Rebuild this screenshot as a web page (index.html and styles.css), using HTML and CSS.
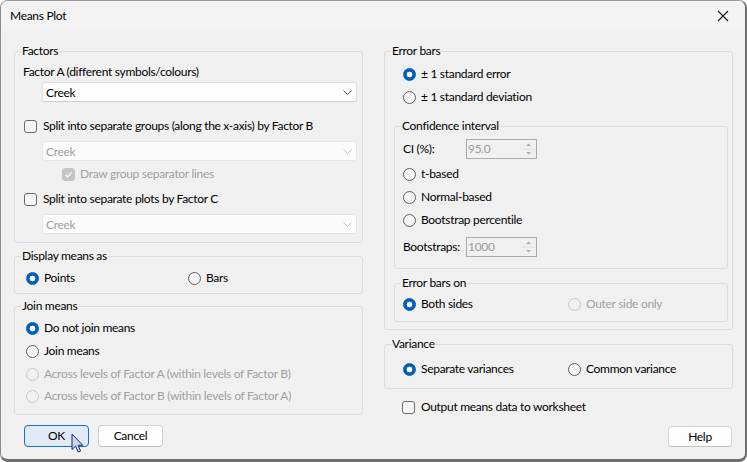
FILE: index.html
```html
<!DOCTYPE html>
<html>
<head>
<meta charset="utf-8">
<title>Means Plot</title>
<link rel="stylesheet" href="styles.css">
</head>
<body>
<div class="window">
  <div class="titlebar">
    <span class="title">Means Plot</span>
    <svg class="close" width="12" height="12" viewBox="0 0 12 12"><path d="M1 1 L11 11 M11 1 L1 11" stroke="#1b1b1b" stroke-width="1.1" fill="none"/></svg>
  </div>
  <div class="content">
    <div class="col">
      <fieldset class="grp factors">
        <legend>Factors</legend>
        <div class="row lbl mt5">Factor A (different symbols/colours)</div>
        <div class="select sel mt2"><span>Creek</span><svg class="chev" width="9" height="5" viewBox="0 0 9 5"><path d="M0.5 0.5 L4.5 4.5 L8.5 0.5" stroke="#555" fill="none"/></svg></div>
        <div class="row chk mt16"><span class="cb"></span><span>Split into separate groups (along the x-axis) by Factor B</span></div>
        <div class="select sel dis mt7"><span>Creek</span><svg class="chev" width="9" height="5" viewBox="0 0 9 5"><path d="M0.5 0.5 L4.5 4.5 L8.5 0.5" stroke="#c4c4c4" fill="none"/></svg></div>
        <div class="row chk sub dis mt5"><span class="cb on-dis"><svg width="13" height="13" viewBox="0 0 13 13"><path d="M3.5 6.8 L5.6 8.8 L9.6 4.4" stroke="#fff" stroke-width="1.2" fill="none"/></svg></span><span>Draw group separator lines</span></div>
        <div class="row chk mt9"><span class="cb"></span><span>Split into separate plots by Factor C</span></div>
        <div class="select sel dis mt7"><span>Creek</span><svg class="chev" width="9" height="5" viewBox="0 0 9 5"><path d="M0.5 0.5 L4.5 4.5 L8.5 0.5" stroke="#c4c4c4" fill="none"/></svg></div>
      </fieldset>

      <fieldset class="grp display">
        <legend>Display means as</legend>
        <div class="pair pair-l mt6">
          <div class="row rad"><span class="rb on"></span><span>Points</span></div>
          <div class="row rad"><span class="rb"></span><span>Bars</span></div>
        </div>
      </fieldset>

      <fieldset class="grp join">
        <legend>Join means</legend>
        <div class="row rad mt6"><span class="rb on"></span><span>Do not join means</span></div>
        <div class="row rad mt7"><span class="rb"></span><span>Join means</span></div>
        <div class="row rad dis mt7"><span class="rb"></span><span>Across levels of Factor A (within levels of Factor B)</span></div>
        <div class="row rad dis mt6"><span class="rb"></span><span>Across levels of Factor B (within levels of Factor A)</span></div>
      </fieldset>

      <div class="buttons">
        <button class="btn default">OK</button>
        <button class="btn">Cancel</button>
      </div>
    </div>

    <div class="col">
      <fieldset class="grp errbars">
        <legend>Error bars</legend>
        <div class="row rad ind mt7"><span class="rb on"></span><span>± 1 standard error</span></div>
        <div class="row rad ind mt7"><span class="rb"></span><span>± 1 standard deviation</span></div>

        <fieldset class="grp inner ci">
          <legend>Confidence interval</legend>
          <div class="row spinrow mt5"><span class="spinlbl">CI (%):</span>
            <div class="spin"><span class="val">95.0</span><span class="arrows"><svg width="15" height="18" viewBox="0 0 15 18"><path d="M1 9 H14" stroke="#dcdcdc"/><path d="M5 6 L7.5 3.5 L10 6 Z" fill="#a8a8a8"/><path d="M5 12 L7.5 14.5 L10 12 Z" fill="#a8a8a8"/></svg></span></div>
          </div>
          <div class="row rad mt7"><span class="rb"></span><span>t-based</span></div>
          <div class="row rad mt7"><span class="rb"></span><span>Normal-based</span></div>
          <div class="row rad mt7"><span class="rb"></span><span>Bootstrap percentile</span></div>
          <div class="row spinrow mt9"><span class="spinlbl">Bootstraps:</span>
            <div class="spin"><span class="val">1000</span><span class="arrows"><svg width="15" height="18" viewBox="0 0 15 18"><path d="M1 9 H14" stroke="#dcdcdc"/><path d="M5 6 L7.5 3.5 L10 6 Z" fill="#a8a8a8"/><path d="M5 12 L7.5 14.5 L10 12 Z" fill="#a8a8a8"/></svg></span></div>
          </div>
        </fieldset>

        <fieldset class="grp inner ebon">
          <legend>Error bars on</legend>
          <div class="pair pair-r mt5">
            <div class="row rad"><span class="rb on"></span><span>Both sides</span></div>
            <div class="row rad dis"><span class="rb"></span><span>Outer side only</span></div>
          </div>
        </fieldset>
      </fieldset>

      <fieldset class="grp variance">
        <legend>Variance</legend>
        <div class="pair pair-r ind mt9">
          <div class="row rad"><span class="rb on"></span><span>Separate variances</span></div>
          <div class="row rad"><span class="rb"></span><span>Common variance</span></div>
        </div>
      </fieldset>

      <div class="row chk outchk"><span class="cb"></span><span>Output means data to worksheet</span></div>

      <div class="helprow">
        <button class="btn help">Help</button>
      </div>
    </div>
  </div>

  <svg class="cursor" width="14" height="21" viewBox="0 0 14 21"><path d="M1 1 L1 16.5 L4.6 13.2 L7.2 19 L9.6 18 L7.1 12.3 L11.8 12.3 Z" fill="#c9d3f2" stroke="#1d2b63" stroke-width="1" stroke-linejoin="round"/></svg>
</div>
</body>
</html>
```

FILE: styles.css
```css
* { box-sizing: border-box; }

html, body {
  margin: 0;
  padding: 0;
  background: #ffffff;
}

body {
  font-family: "Segoe UI", Lato, "Liberation Sans", Arial, sans-serif;
  font-size: 12px;
  letter-spacing: -0.3px;
  color: #000;
}

.window {
  position: relative;
  width: 747px;
  height: 462px;
  background: #f0f0f0;
  border-left: 1px solid #8a8a8a;
  border-top: 1px solid #9a9a9a;
  border-right: 2px solid #6e6e6e;
  border-bottom: 3px solid #6e6e6e;
  border-radius: 8px;
  overflow: hidden;
}

.titlebar {
  height: 30px;
  background: #f3f3f3;
  display: flex;
  align-items: center;
  justify-content: space-between;
  padding: 0 16px 0 9px;
}

.title {
  font-size: 12px;
  line-height: 16px;
  margin-top: -1px;
}

.close {
  display: block;
  margin-top: -1px;
}

.content {
  display: flex;
  gap: 21px;
  padding: 12px 0 0 13px;
}

.col {
  width: 349px;
  display: flex;
  flex-direction: column;
}

.grp {
  margin: 0;
  min-width: 0;
  border: 1px solid #dcdcdc;
  border-radius: 3px;
  padding: 0 5px 0 8px;
}

.grp legend {
  padding: 0 1px;
  margin-left: -2px;
  line-height: 16px;
  font-size: 12px;
}

.factors { padding-bottom: 8px; }
.display { margin-top: 5px; padding-bottom: 7px; }
.join { margin-top: 4px; padding-bottom: 10px; }

.row {
  display: flex;
  align-items: center;
  height: 16px;
  line-height: 16px;
  white-space: nowrap;
}

.mt2 { margin-top: 2px; }
.mt5 { margin-top: 5px; }
.mt6 { margin-top: 6px; }
.mt7 { margin-top: 7px; }
.mt9 { margin-top: 9px; }
.mt16 { margin-top: 16px; }

.select {
  display: flex;
  align-items: center;
  justify-content: space-between;
  height: 20px;
  width: 315px;
  margin-left: 19px;
  background: #fdfdfd;
  border: 1px solid #dedede;
  border-bottom-color: #cfcfcf;
  border-radius: 3px;
  padding: 0 4px 0 3px;
}

.select.dis {
  background: #fbfbfb;
  border-color: #e6e6e6;
  color: #a0a0a0;
}

.chev { display: block; }

.chk { margin-left: 1px; }
.chk.sub { margin-left: 39px; }

.cb {
  width: 13px;
  height: 13px;
  border: 1px solid #6a6a6a;
  border-radius: 3px;
  background: #f6f6f6;
  margin-right: 6px;
  flex: none;
  position: relative;
}

.cb.on-dis {
  background: #c5c5c5;
  border-color: #c5c5c5;
  margin-right: 5px;
}

.cb.on-dis svg {
  position: absolute;
  left: -1px;
  top: -1px;
}

.dis { color: #a0a0a0; }

.rad { margin-left: 3px; }

.rb {
  width: 13px;
  height: 13px;
  border-radius: 50%;
  border: 1px solid #5e5e5e;
  background: #f5f5f5;
  margin-right: 5px;
  flex: none;
}

.rb.on {
  border-color: #005fb8;
  background: radial-gradient(circle at center, #ffffff 0 2.6px, #005fb8 3.2px);
}

.dis .rb {
  border-color: #c6c6c6;
  background: #f0f0f0;
}

.pair {
  display: flex;
}

.pair-l > .row:first-child { width: 162px; }
.pair-r > .row:first-child { width: 165px; }

.pair .row.rad { margin-left: 0; }
.pair-l { margin-left: 3px; }

/* right column */
.errbars { padding-bottom: 7px; }

.ind { margin-left: 10px; }

.inner {
  margin-left: 1px;
  width: 334px;
  padding-left: 8px;
}

.inner .rad { margin-left: 0; }

.ci { margin-top: 13px; padding-bottom: 11px; }
.ebon { margin-top: 6px; padding-bottom: 9px; }

.variance { margin-top: 6px; padding-bottom: 11px; }

.spinrow { height: 20px; }

.spinlbl {
  width: 63px;
}

.spin {
  width: 71px;
  height: 20px;
  border: 1px solid #ababab;
  background: #f0f0f0;
  display: flex;
  justify-content: space-between;
  align-items: center;
  color: #9a9a9a;
  padding-left: 1px;
}

.spin .arrows {
  display: block;
  width: 15px;
  height: 18px;
}

.spin .arrows svg { display: block; }

.outchk { margin-left: 18px; margin-top: 10px; }

.buttons {
  display: flex;
  gap: 9px;
  margin-top: 10px;
  margin-left: 10px;
}

.btn {
  font-family: inherit;
  font-size: 12px;
  letter-spacing: -0.3px;
  color: #000;
  width: 65px;
  height: 22px;
  background: #fdfdfd;
  border: 1px solid #d3d3d3;
  border-bottom-color: #c2c2c2;
  border-radius: 4px;
  padding: 0;
  line-height: 18px;
}

.btn.default {
  background: #e0ebf7;
  border: 1px solid #1a6fc2;
}

.helprow {
  display: flex;
  justify-content: flex-end;
  margin-top: 11px;
  padding-right: 1px;
}

.btn.help { width: 64px; height: 21px; }

.cursor {
  position: absolute;
  left: 70px;
  top: 432px;
}
```
